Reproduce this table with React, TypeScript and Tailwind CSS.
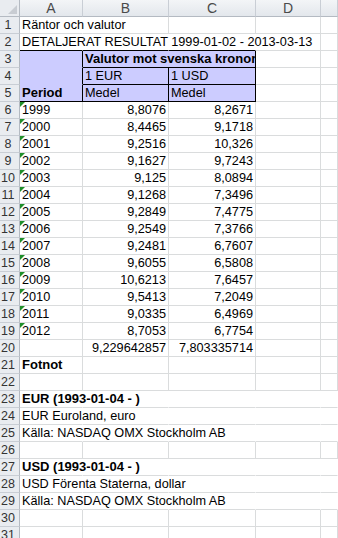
import React from "react";

type CellSpec = {
  t?: string;
  right?: boolean;
  bold?: boolean;
  noR?: boolean;
  tri?: boolean;
  cls?: string;
  span2?: boolean;
};

const GRID = "grid grid-cols-[20px_63px_86px_87px_65px_1fr]";

function Cell({ c }: { c: CellSpec }) {
  const base =
    "relative h-[17px] border-b border-r whitespace-nowrap px-[2px] leading-[16px] text-black";
  const colour = c.cls ?? "border-[#dadcdd]";
  const rr = c.noR ? "border-r-transparent" : "";
  const al = c.right ? "text-right" : "text-left";
  const wt = c.bold ? "font-bold text-[13px]" : "text-[12.7px]";
  const span = c.span2 ? "col-span-2 overflow-hidden" : "";
  return (
    <div className={`${base} ${colour} ${rr} ${al} ${wt} ${span}`}>
      {c.tri && (
        <span className="absolute left-0 top-0 h-0 w-0 border-t-[5px] border-r-[5px] border-t-[#1f8f2a] border-r-transparent" />
      )}
      {c.t}
    </div>
  );
}

function RowHead({ n }: { n: number }) {
  return (
    <div className="h-[17px] border-b border-r border-b-[#c9ced5] border-r-[#b4bac2] bg-[#e9ecf0] text-center text-[12.5px] leading-[16px] text-[#333] pr-[3px]">
      {n}
    </div>
  );
}

const blank: CellSpec = {};
const noV: CellSpec = { noR: true };

const years: [string, string, string][] = [
  ["1999", "8,8076", "8,2671"],
  ["2000", "8,4465", "9,1718"],
  ["2001", "9,2516", "10,326"],
  ["2002", "9,1627", "9,7243"],
  ["2003", "9,125", "8,0894"],
  ["2004", "9,1268", "7,3496"],
  ["2005", "9,2849", "7,4775"],
  ["2006", "9,2549", "7,3766"],
  ["2007", "9,2481", "6,7607"],
  ["2008", "9,6055", "6,5808"],
  ["2009", "10,6213", "7,6457"],
  ["2010", "9,5413", "7,2049"],
  ["2011", "9,0335", "6,4969"],
  ["2012", "8,7053", "6,7754"],
];

const P = "bg-[#ccccff]";

const rows: CellSpec[][] = [
  [{ t: "Räntor och valutor", noR: true }, blank, blank, blank, blank],
  [
    { t: "DETALJERAT RESULTAT 1999-01-02 - 2013-03-13", noR: true, cls: "border-[#dadcdd] border-b-black" },
    { noR: true, cls: "border-[#dadcdd] border-b-black" },
    { noR: true, cls: "border-[#dadcdd] border-b-black" },
    blank,
    blank,
  ],
  [
    { cls: `${P} border-r-black border-b-[#ccccff]` },
    { t: "Valutor mot svenska kronor", bold: true, span2: true, cls: `${P} border-black` },
    blank,
    blank,
  ],
  [
    { cls: `${P} border-r-black border-b-[#ccccff]` },
    { t: "1 EUR", cls: `${P} border-black` },
    { t: "1 USD", cls: `${P} border-black` },
    blank,
    blank,
  ],
  [
    { t: "Period", bold: true, cls: `${P} border-black` },
    { t: "Medel", cls: `${P} border-black` },
    { t: "Medel", cls: `${P} border-black` },
    blank,
    blank,
  ],
  ...years.map(([y, b, c]) => [
    { t: y, tri: true },
    { t: b, right: true },
    { t: c, right: true },
    blank,
    blank,
  ]),
  [blank, { t: "9,229642857", right: true }, { t: "7,803335714", right: true }, blank, blank],
  [{ t: "Fotnot", bold: true }, blank, blank, blank, blank],
  [blank, blank, blank, blank, blank],
  [{ t: "EUR (1993-01-04 - )", bold: true, noR: true }, noV, noV, noV, noV],
  [{ t: "EUR Euroland, euro", noR: true }, noV, noV, noV, noV],
  [{ t: "Källa: NASDAQ OMX Stockholm AB", noR: true }, noV, noV, noV, noV],
  [blank, blank, blank, blank, blank],
  [{ t: "USD (1993-01-04 - )", bold: true, noR: true }, noV, noV, noV, noV],
  [{ t: "USD Förenta Staterna, dollar", noR: true }, noV, noV, noV, noV],
  [{ t: "Källa: NASDAQ OMX Stockholm AB", noR: true }, noV, noV, noV, noV],
  [blank, blank, blank, blank, blank],
  [blank, blank, blank, blank, blank],
];

export default function App() {
  return (
    <div className="h-[538px] w-[338px] overflow-hidden bg-white font-['Liberation_Sans',Arial,sans-serif]">
      <div className={GRID}>
        <div className="relative h-[17px] border-b border-r border-b-[#b4bac2] border-r-[#b4bac2] bg-[#e9ecf0]">
          <span className="absolute bottom-[2px] right-[2px] h-0 w-0 border-b-[9px] border-l-[9px] border-b-[#c8ccd2] border-l-transparent" />
        </div>
        {["A", "B", "C", "D", ""].map((l, i) => (
          <div
            key={i}
            className="h-[17px] border-b border-r border-b-[#b4bac2] border-r-[#c9ced5] bg-linear-to-b from-[#f3f5f7] to-[#e3e7ec] text-center text-[14px] leading-[16px] text-[#4a4a4a]"
          >
            {l}
          </div>
        ))}
      </div>
      {rows.map((r, i) => (
        <div key={i} className={GRID}>
          <RowHead n={i + 1} />
          {r.map((c, j) => (
            <Cell key={j} c={c} />
          ))}
        </div>
      ))}
    </div>
  );
}
